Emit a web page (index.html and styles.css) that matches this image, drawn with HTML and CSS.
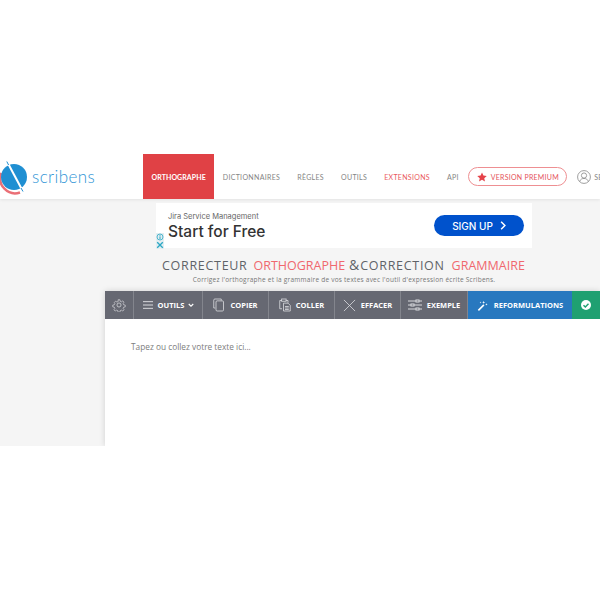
FILE: index.html
```html
<!DOCTYPE html>
<html lang="fr">
<head>
    <meta charset="UTF-8">
    <title>Scribens</title>
    <link rel="stylesheet" href="styles.css">
</head>
<body>
    <div class="page">
        <!-- Top navigation -->
        <header class="topbar">
            <a class="logo">
                <svg class="logo-mark" viewBox="0 0 30 36" width="30" height="36">
                    <path d="M1.200 13A15 15 0 0 0 20 32.500" fill="none" stroke="#ea6f76" stroke-width="2.500"/>
                    <circle cx="14" cy="17" r="13" fill="#1f8fd2"/>
                    <line x1="7" y1="1.500" x2="23" y2="31.500" stroke="#fff" stroke-width="2"/>
                    <line x1="6.800" y1="1.500" x2="8.600" y2="5" stroke="#1f8fd2" stroke-width="1"/>
                    <line x1="21" y1="28" x2="23" y2="31.500" stroke="#1f8fd2" stroke-width="1"/>
                </svg>
                <span class="logo-text">scribens</span>
            </a>
            <nav class="menu">
                <a class="menu-item active">ORTHOGRAPHE</a>
                <a class="menu-item">DICTIONNAIRES</a>
                <a class="menu-item">RÈGLES</a>
                <a class="menu-item">OUTILS</a>
                <a class="menu-item red">EXTENSIONS</a>
                <a class="menu-item">API</a>
            </nav>
            <a class="premium">
                <svg viewBox="0 0 24 24" width="10" height="10"><path d="M12 1l3.400 7.400 8 .9-6 5.400 1.700 8L12 18.700 4.900 22.700l1.700-8-6-5.400 8-.9z" fill="#e5434a"/></svg>
                VERSION PREMIUM
            </a>
            <a class="account">
                <svg viewBox="0 0 24 24" width="14" height="14" fill="none" stroke="#8a8a8a" stroke-width="1.400">
                    <circle cx="12" cy="12" r="11"/>
                    <circle cx="12" cy="9.500" r="4.500"/>
                    <path d="M4.500 20c1-4 4-5.500 7.500-5.500s6.500 1.500 7.500 5.500"/>
                </svg>
                <span>SE CONNECTER</span>
            </a>
        </header>

        <!-- Ad banner -->
        <div class="ad">
            <div class="ad-copy">
                <div class="ad-brand">Jira Service Management</div>
                <div class="ad-title">Start for Free</div>
            </div>
            <a class="ad-button">SIGN UP
                <svg viewBox="0 0 8 12" width="6" height="9" fill="none" stroke="#fff" stroke-width="2"><path d="M1.500 1l5 5-5 5"/></svg>
            </a>
            <div class="ad-marks">
                <svg class="ad-mark" viewBox="0 0 8 8" width="8" height="8">
                    <circle cx="4" cy="4" r="3" fill="none" stroke="#2aa7c4" stroke-width=".8"/>
                    <path d="M4 3.400V6M4 2v.8" stroke="#2aa7c4" stroke-width="1"/>
                </svg>
                <svg class="ad-mark" viewBox="0 0 8 8" width="8" height="8">
                    <path d="M1.200 1.200l5.600 5.600M6.800 1.200L1.200 6.800" stroke="#2aa7c4" stroke-width="1.300"/>
                </svg>
            </div>
        </div>

        <h1 class="headline">CORRECTEUR <em>ORTHOGRAPHE</em> <span class="amp">&amp;</span><span class="word">CORRECTION</span> <em>GRAMMAIRE</em></h1>
        <p class="subline">Corrigez l'orthographe et la grammaire de vos textes avec l'outil d'expression écrite Scribens.</p>

        <!-- Editor -->
        <section class="editor">
            <div class="toolbar">
                <button class="tool tool-gear">
                    <svg viewBox="0 0 24 24" width="14" height="14" fill="none" stroke="#d8d9dd" stroke-width="1.300">
                        <circle cx="12" cy="12" r="3.500"/>
                        <path d="M10.300 2h3.400l.6 3 2.300 1 2.600-1.700 2.400 2.400-1.700 2.600 1 2.300 3 .6v3.400l-3 .6-1 2.300 1.700 2.600-2.400 2.400-2.600-1.700-2.300 1-.6 3h-3.400l-.6-3-2.300-1-2.600 1.700-2.400-2.400 1.700-2.600-1-2.300-3-.6v-3.400l3-.6 1-2.300L3.100 7.100l2.400-2.400 2.600 1.700 2.300-1z" transform="translate(1.200 1.200) scale(.9)"/>
                    </svg>
                </button>
                <button class="tool tool-outils">
                    <svg viewBox="0 0 14 12" width="12" height="10" fill="none" stroke="#d8d9dd" stroke-width="1.200"><path d="M1 2h12M1 6h12M1 10h12"/></svg>
                    <span>OUTILS</span>
                    <svg viewBox="0 0 8 6" width="6" height="5" fill="none" stroke="#fff" stroke-width="1.500"><path d="M1 1l3 3 3-3"/></svg>
                </button>
                <button class="tool tool-copier">
                    <svg viewBox="0 0 16 18" width="12" height="14" fill="none" stroke="#d8d9dd" stroke-width="1.100"><path d="M11 3V1H2.500A1.500 1.500 0 0 0 1 2.500V13h2"/><rect x="4" y="3.500" width="10" height="13.500" rx="1.500"/></svg>
                    <span>COPIER</span>
                </button>
                <button class="tool tool-coller">
                    <svg viewBox="0 0 16 18" width="12" height="14" fill="none" stroke="#d8d9dd" stroke-width="1.100"><path d="M4 14H1V3h3M9 3h3v3"/><rect x="3.500" y="1" width="6" height="3"/><path d="M6 6.500h6l3 3V17H6z"/><path d="M8 11h5M8 13h5M8 15h5"/></svg>
                    <span>COLLER</span>
                </button>
                <button class="tool tool-effacer">
                    <svg viewBox="0 0 14 14" width="13" height="13" fill="none" stroke="#d8d9dd" stroke-width=".9"><path d="M1 1l12 12M13 1L1 13"/></svg>
                    <span>EFFACER</span>
                </button>
                <button class="tool tool-exemple">
                    <svg viewBox="0 0 14 12" width="14" height="12" fill="none" stroke="#d8d9dd" stroke-width="1"><path d="M0 2h8M11 2h3M0 6h3M6 6h8M0 10h8M11 10h3"/><rect x="8" y="1" width="3" height="2"/><rect x="3" y="5" width="3" height="2"/><rect x="8" y="9" width="3" height="2"/></svg>
                    <span>EXEMPLE</span>
                </button>
                <button class="tool tool-reform">
                    <svg viewBox="0 0 14 14" width="11" height="11" fill="#fff"><path d="M1 12.500L8 5.500l1.500 1.500-7 7z"/><path d="M8.500 1l.5 1.500L10.500 3 9 3.500 8.500 5 8 3.500 6.500 3 8 2.500zM12 4l.4 1.100 1.100.4-1.100.4L12 7l-.4-1.100-1.100-.4 1.100-.4zM4.500 2l.3.900.9.300-.9.300-.3.900-.3-.9-.9-.3.900-.3z"/></svg>
                    <span>REFORMULATIONS</span>
                </button>
                <button class="tool tool-check">
                    <svg viewBox="0 0 12 12" width="10" height="10"><circle cx="6" cy="6" r="6" fill="#fff"/><path d="M3 6.200l2.200 2.200L9 4.400" fill="none" stroke="#1fa071" stroke-width="1.700"/></svg>
                </button>
            </div>
            <div class="editor-body">Tapez ou collez votre texte ici...</div>
        </section>
    </div>
</body>
</html>
```
FILE: styles.css
```css
/* General Styles */
body {
    margin: 0;
    padding-top: 154px;
    background: #fff;
    font-family: "Open Sans", sans-serif;
    color: #666;
}

.page {
    height: 292px;
    overflow: hidden;
    background: #f5f5f5;
}

/* Top navigation */
.topbar {
    display: flex;
    align-items: center;
    height: 45px;
    background: #fff;
    box-shadow: 0 1px 3px rgba(0, 0, 0, 0.08);
    white-space: nowrap;
}

.logo {
    display: flex;
    align-items: center;
    width: 143px;
    flex-shrink: 0;
}

.logo-mark {
    margin-top: 2px;
}

.logo-text {
    margin-left: 2px;
    font-family: "Lato", sans-serif;
    font-size: 17px;
    font-weight: 300;
    letter-spacing: 0.4px;
    color: #2f95d6;
}

.menu {
    display: flex;
    align-items: center;
    height: 100%;
}

.menu-item {
    padding: 0 8.500px;
    font-family: "Lato", sans-serif;
    font-size: 7px;
    letter-spacing: 0.32px;
    color: #858585;
}

.menu-item.active {
    display: flex;
    align-items: center;
    height: 100%;
    background: #e04145;
    color: #fff;
    font-weight: 700;
    letter-spacing: 0.07px;
}

.menu-item.red {
    color: #ea5a60;
}

.premium {
    display: flex;
    align-items: center;
    justify-content: center;
    gap: 4px;
    width: 97px;
    height: 17px;
    margin-left: 1px;
    border: 1px solid #ee8f92;
    border-radius: 10px;
    font-family: "Lato", sans-serif;
    font-size: 7px;
    letter-spacing: 0.25px;
    color: #e5535a;
    flex-shrink: 0;
}

.account {
    display: flex;
    align-items: center;
    gap: 3px;
    margin-left: 10px;
    font-family: "Lato", sans-serif;
    font-size: 7px;
    color: #858585;
}

/* Ad banner */
.ad {
    position: relative;
    display: flex;
    align-items: center;
    justify-content: space-between;
    box-sizing: border-box;
    width: 376px;
    height: 45px;
    margin: 4px 0 0 156px;
    padding: 0 8px 0 12px;
    background: #fff;
    font-family: "Inter", sans-serif;
}

.ad-copy {
    margin-top: 2px;
}

.ad-brand {
    font-size: 7.500px;
    color: #666;
}

.ad-title {
    margin-top: 2px;
    font-size: 15.500px;
    font-weight: 500;
    line-height: 18px;
    color: #333;
}

.ad-button {
    display: flex;
    align-items: center;
    justify-content: center;
    gap: 7px;
    width: 90px;
    height: 21px;
    border-radius: 11px;
    background: #0052cc;
    font-size: 10px;
    font-weight: 500;
    color: #fff;
}

.ad-marks {
    position: absolute;
    left: 0;
    bottom: -1px;
    display: flex;
    flex-direction: column;
}

.ad-mark {
    display: block;
    background: #e4eef1;
}

/* Headline */
.headline {
    margin: 8px 0 0;
    padding-left: 162px;
    font-size: 12.500px;
    font-weight: 400;
    line-height: 17px;
    letter-spacing: 0.7px;
    white-space: nowrap;
    color: #5f6368;
}

.headline em {
    margin-left: 2px;
    font-style: normal;
    letter-spacing: 0;
    color: #f0686e;
}

.amp {
    font-size: 14px;
    letter-spacing: 0;
}

.word {
    margin: 0 1px;
    letter-spacing: 0.7px;
}

.subline {
    margin: 1px 0 0;
    font-size: 6.500px;
    line-height: 10px;
    letter-spacing: 0.23px;
    text-align: center;
    padding-left: 88px;
    width: 512px;
    color: #777;
}

/* Editor */
.editor {
    margin: 6px 0 0 105px;
    box-shadow: 0 0 6px rgba(0, 0, 0, 0.15);
}

.toolbar {
    display: flex;
    height: 28px;
    background: #666872;
}

.tool {
    display: flex;
    align-items: center;
    justify-content: center;
    gap: 5px;
    box-sizing: border-box;
    height: 100%;
    padding: 0;
    border: none;
    border-right: 1px solid #83858d;
    background: none;
    font-family: "Open Sans", sans-serif;
    font-size: 7.500px;
    font-weight: 700;
    color: #fff;
    flex-shrink: 0;
}

.tool-gear { width: 29px; }
.tool-outils { width: 69px; gap: 4px; }
.tool-copier { width: 66px; }
.tool-coller { width: 66px; }
.tool-effacer { width: 66px; }
.tool-exemple { width: 67px; }

.tool-reform {
    width: 104px;
    border-right: none;
    background: #2878bf;
    gap: 6px;
}

.tool-check {
    flex: 1;
    border-right: none;
    background: #1fa071;
}

.editor-body {
    height: 127px;
    box-sizing: border-box;
    padding: 22px 26px;
    background: #fff;
    font-size: 8.300px;
    line-height: 12px;
    color: #7d7d7d;
}
```
